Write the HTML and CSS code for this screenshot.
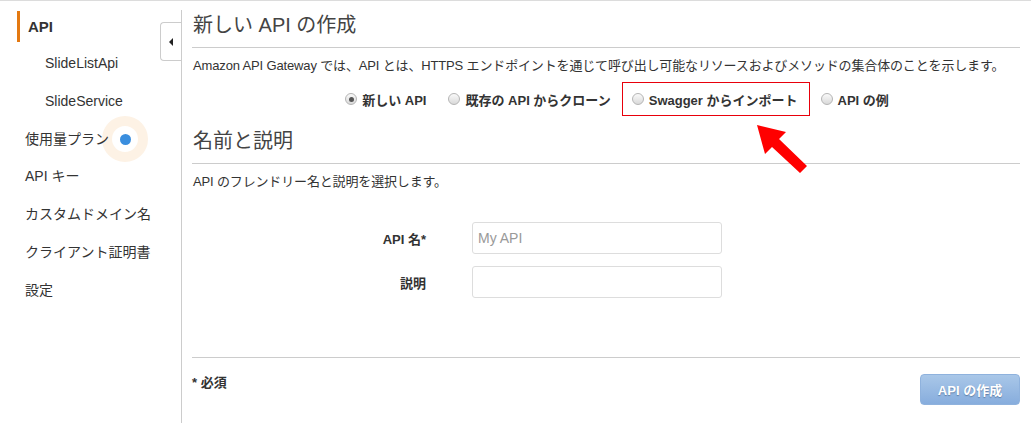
FILE: index.html
```html
<!DOCTYPE html>
<html lang="ja">
<head>
<meta charset="utf-8">
<link rel="stylesheet" href="styles.css">
</head>
<body>
<div class="page">
  <nav class="sidebar">
    <div class="nav-active">API</div>
    <ul class="nav-list">
      <li class="nav-sub">SlideListApi</li>
      <li class="nav-sub">SlideService</li>
      <li class="nav-item">使用量プラン <span class="dot"></span></li>
      <li class="nav-item">API キー</li>
      <li class="nav-item">カスタムドメイン名</li>
      <li class="nav-item">クライアント証明書</li>
      <li class="nav-item">設定</li>
    </ul>
    <button class="toggle" aria-label="collapse"><span class="tri"></span></button>
  </nav>
  <main class="main">
    <h1 class="heading">新しい API の作成</h1>
    <p class="desc">Amazon API Gateway では、API とは、HTTPS エンドポイントを通じて呼び出し可能なリソースおよびメソッドの集合体のことを示します。</p>
    <div class="choices">
      <label class="choice"><span class="radio checked"></span>新しい API</label>
      <label class="choice"><span class="radio"></span>既存の API からクローン</label>
      <label class="choice boxed"><span class="radio"></span>Swagger からインポート</label>
      <label class="choice"><span class="radio"></span>API の例</label>
    </div>
    <h2 class="heading section">名前と説明</h2>
    <p class="desc">API のフレンドリー名と説明を選択します。</p>
    <div class="form">
      <div class="row">
        <span class="label">API 名*</span>
        <input class="field" type="text" placeholder="My API">
      </div>
      <div class="row">
        <span class="label">説明</span>
        <input class="field" type="text">
      </div>
    </div>
    <div class="footer">
      <span class="req">* 必須</span>
      <button class="create">API の作成</button>
    </div>
  </main>
</div>
<svg class="arrow" width="70" height="60" viewBox="750 118 70 60">
  <polygon fill="#f00" points="757,124 786,131 779,138 807,165 800,172 772,146 765,153"/>
</svg>
</body>
</html>
```

FILE: styles.css
```css
*, *::before, *::after { box-sizing: border-box; }
html, body { margin: 0; padding: 0; background: #fff; }
body {
  border-top: 1px solid #dcdcdc;
  font-family: "Liberation Sans", "Noto Sans CJK JP", sans-serif;
  color: #333;
  position: relative;
  height: 423px;
  overflow: hidden;
}
.page {
  display: flex;
  margin-top: 9px;
  height: 413px;
}
.sidebar {
  width: 181px;
  flex: none;
  position: relative;
  z-index: 0;
}
.nav-active {
  margin: 1px 0 0 17px;
  border-left: 3px solid #e47911;
  padding-left: 8px;
  height: 31px;
  line-height: 31px;
  font-size: 15px;
  font-weight: bold;
  color: #333;
}
.nav-list {
  list-style: none;
  margin: 3px 0 0 0;
  padding: 0;
}
.nav-list li {
  height: 37.8px;
  line-height: 37.8px;
  font-size: 14px;
  color: #333;
  position: relative;
}
.nav-sub { padding-left: 45px; color: #444; }
.nav-item { padding-left: 25px; }
.dot {
  display: inline-block;
  width: 11px;
  height: 11px;
  border-radius: 50%;
  background: #3a8ede;
  vertical-align: -1px;
  margin-left: 7px;
  position: relative;
}
.dot::before {
  content: "";
  position: absolute;
  left: -17.5px;
  top: -17.5px;
  width: 46px;
  height: 46px;
  border-radius: 50%;
  border: 10px solid #fdf2e5;
  z-index: -1;
}
.toggle {
  position: absolute;
  right: 0;
  top: 12px;
  width: 21px;
  height: 39px;
  border: 1px solid #ccc;
  border-right: none;
  border-radius: 4px 0 0 4px;
  background: #fff;
  padding: 0;
  display: flex;
  align-items: center;
  justify-content: center;
}
.tri {
  width: 0;
  height: 0;
  border-top: 4px solid transparent;
  border-bottom: 4px solid transparent;
  border-right: 4px solid #222;
}
.main {
  flex: 1;
  border-left: 1px solid #ccc;
  padding: 0 11px 0 10px;
  position: relative;
  z-index: 0;
}
.heading {
  margin: 0;
  height: 38px;
  padding-top: 1px;
  padding-bottom: 8px;
  line-height: 28px;
  font-size: 20px;
  font-weight: normal;
  color: #444;
  border-bottom: 1px solid #ccc;
  padding-left: 1px;
}
.heading.section { margin-top: 10px; }
.desc {
  margin: 9px 0 0 0;
  font-size: 13px;
  line-height: 18px;
  color: #333;
  padding-left: 1px;
  letter-spacing: -0.15px;
}
.choices {
  display: flex;
  justify-content: center;
  margin-top: 7px;
  padding-left: 22px;
  height: 34px;
}
.choice {
  display: flex;
  align-items: center;
  padding: 0 10px;
  font-size: 13px;
  font-weight: bold;
  color: #333;
  border: 1px solid transparent;
}
.choice.boxed { border-color: #e8000b; padding: 0 11px 0 9px; }
.radio {
  width: 12px;
  height: 12px;
  border-radius: 50%;
  border: 1px solid #b5b5b5;
  background: linear-gradient(#fafafa, #d9d9d9);
  margin-right: 5px;
  position: relative;
  flex: none;
}
.radio.checked::after {
  content: "";
  position: absolute;
  left: 2.5px;
  top: 2.5px;
  width: 5px;
  height: 5px;
  border-radius: 50%;
  background: #555;
}
.form {
  margin-top: 31px;
  display: flex;
  flex-direction: column;
  gap: 12px;
}
.row {
  display: flex;
  align-items: center;
}
.label {
  width: 234px;
  text-align: right;
  font-size: 13px;
  font-weight: bold;
  color: #333;
  margin-right: 46px;
}
.field {
  width: 250px;
  height: 32px;
  border: 1px solid #ddd;
  border-radius: 3px;
  padding: 0 5px;
  font-family: "Liberation Sans", "Noto Sans CJK JP", sans-serif;
  font-size: 14px;
  color: #333;
  outline: none;
}
.field::placeholder { color: #999; }
.footer {
  margin-top: 59px;
  border-top: 1px solid #ccc;
  padding-top: 16px;
  display: flex;
  justify-content: space-between;
  align-items: flex-start;
}
.req {
  font-size: 13px;
  font-weight: bold;
  line-height: 18px;
  color: #333;
}
.create {
  width: 100px;
  height: 31px;
  border: 1px solid #8fb2dd;
  border-radius: 4px;
  background: linear-gradient(#a9c7e8, #87addd);
  color: #fff;
  font-family: "Liberation Sans", "Noto Sans CJK JP", sans-serif;
  font-size: 13px;
  font-weight: bold;
  text-shadow: 0 1px 1px rgba(60, 90, 130, 0.6);
  padding: 0;
}
.arrow {
  position: absolute;
  left: 750px;
  top: 118px;
}
```
